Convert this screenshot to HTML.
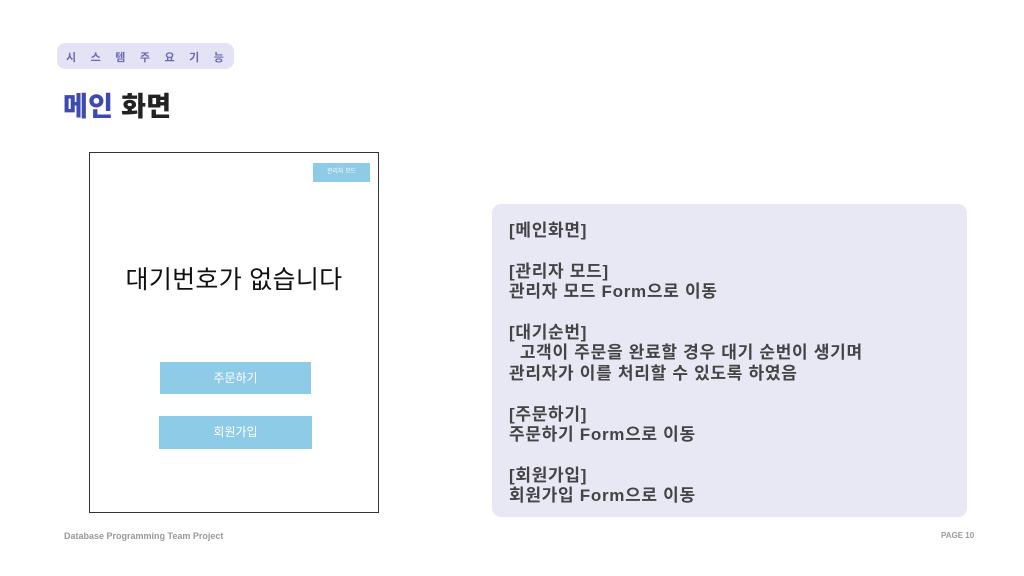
<!DOCTYPE html>
<html><head><meta charset="utf-8"><style>
*{margin:0;padding:0;box-sizing:border-box}
body{width:1024px;height:576px;background:#fff;position:relative;overflow:hidden;font-family:"Liberation Sans","Noto Sans CJK KR",sans-serif}
.a{position:absolute}
</style></head><body>
<div class="a" style="left:57px;top:43px;width:177px;height:26px;background:#e4e3f5;border-radius:8px;"></div>
<div class="a" style="left:66px;top:49px;font-size:11px;color:#6b68b0;font-weight:bold;letter-spacing:14.5px;white-space:nowrap">시스템주요기능</div>
<div class="a" style="left:63px;top:85px;font-size:27px;font-weight:900;letter-spacing:0.3px;white-space:nowrap"><span style="color:#3f4ab0">메인</span> <span style="color:#222">화면</span></div>
<div class="a" style="left:89px;top:152px;width:290px;height:361px;border:1px solid #333;"></div>
<div class="a" style="left:313px;top:163px;width:57px;height:19px;background:#8ecbe6;color:#fff;font-size:6px;text-align:center;line-height:19px">관리자 모드</div>
<div class="a" style="left:90px;top:260px;width:288px;text-align:center;font-size:25px;color:#111;letter-spacing:0.3px">대기번호가 없습니다</div>
<div class="a" style="left:160px;top:362px;width:151px;height:32px;background:#8ecbe6;color:#fff;font-size:12px;text-align:center;line-height:32px">주문하기</div>
<div class="a" style="left:159px;top:416px;width:153px;height:33px;background:#8ecbe6;color:#fff;font-size:12px;text-align:center;line-height:33px">회원가입</div>
<div class="a" style="left:492px;top:204px;width:475px;height:313px;background:#e8e7f4;border-radius:9px"></div>
<div class="a" style="left:509px;top:221px;font-size:17px;line-height:20.4px;color:#444;font-weight:bold;letter-spacing:0.7px;white-space:pre">[메인화면]

[관리자 모드]
관리자 모드 Form으로 이동

[대기순번]
  고객이 주문을 완료할 경우 대기 순번이 생기며
관리자가 이를 처리할 수 있도록 하였음

[주문하기]
주문하기 Form으로 이동

[회원가입]
회원가입 Form으로 이동</div>
<div class="a" style="left:64px;top:531px;font-size:9px;color:#999;font-weight:bold">Database Programming Team Project</div>
<div class="a" style="left:941px;top:531px;font-size:8px;color:#999;font-weight:bold">PAGE 10</div>
</body></html>
